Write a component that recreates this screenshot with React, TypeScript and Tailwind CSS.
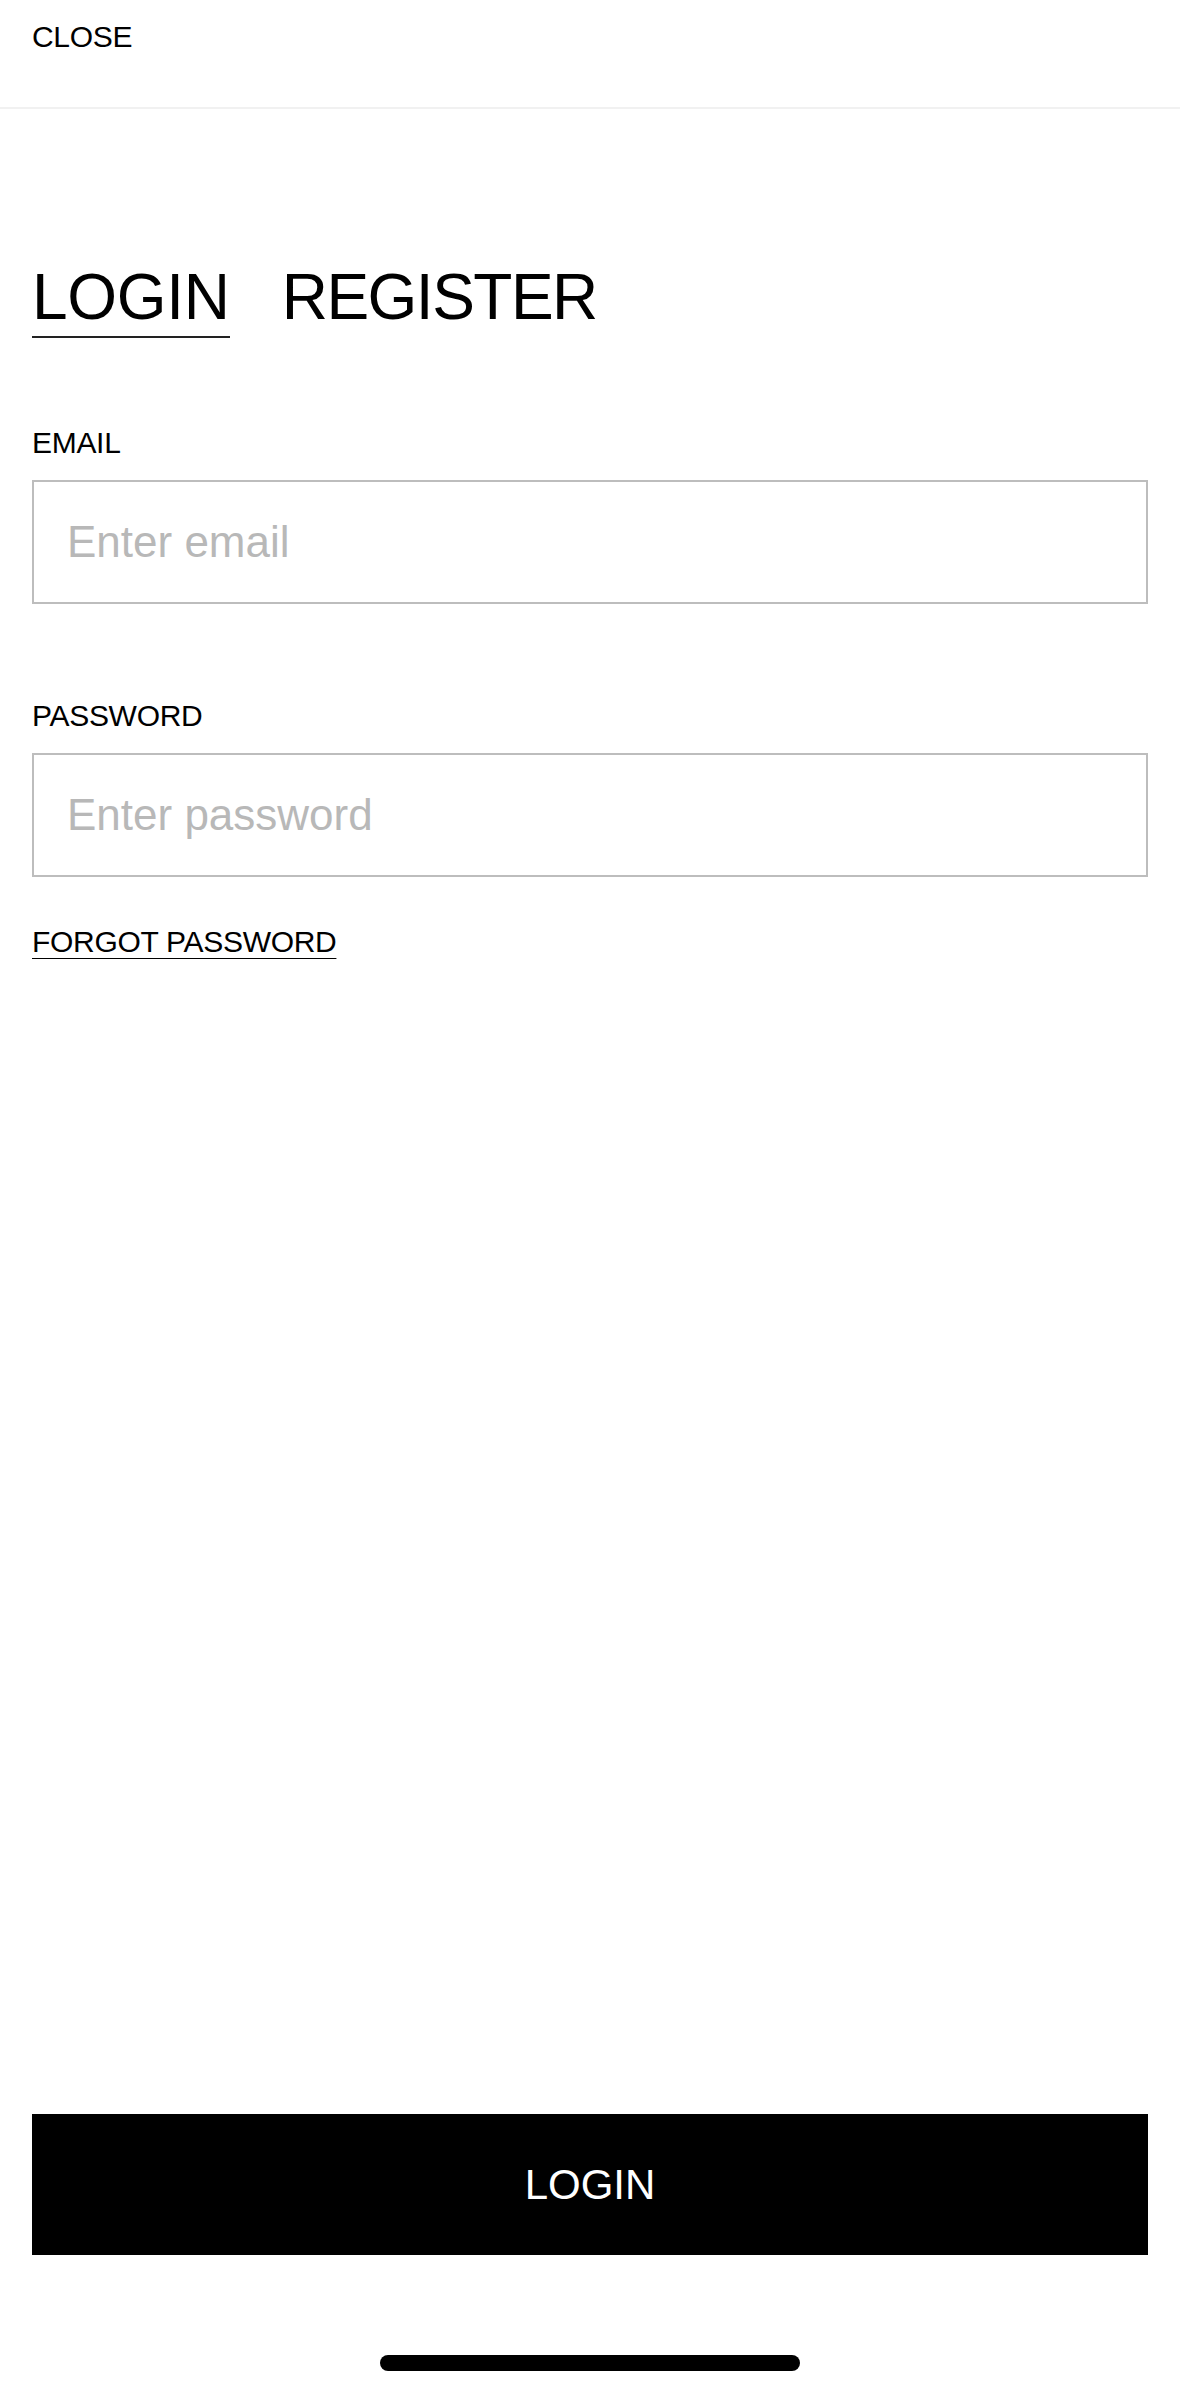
import { useState } from "react";

export default function App() {
  const [tab, setTab] = useState<"login" | "register">("login");
  const [email, setEmail] = useState("");
  const [password, setPassword] = useState("");

  return (
    <div
      className="flex h-[2396px] w-full flex-col bg-white text-black"
      style={{ fontFamily: '"Liberation Sans", Arial, sans-serif' }}
    >
      {/* top bar */}
      <div className="h-[109px] border-b-2 border-[#f1f1f1] px-[32px] pt-[22px]">
        <button className="text-[30px] leading-[30px] tracking-[-0.3px]">CLOSE</button>
      </div>

      <div className="flex flex-1 flex-col px-[32px]">
        {/* tabs */}
        <div className="mt-[156px] flex items-start gap-[52px]">
          <button
            onClick={() => setTab("login")}
            className={`pb-[7px] text-[64px] leading-[64px] tracking-[-0.3px] ${
              tab === "login" ? "border-b-2 border-[#222]" : "border-b-2 border-transparent"
            }`}
          >
            LOGIN
          </button>
          <button
            onClick={() => setTab("register")}
            className={`pb-[7px] text-[64px] leading-[64px] tracking-[-1.5px] ${
              tab === "register" ? "border-b-2 border-[#222]" : "border-b-2 border-transparent"
            }`}
          >
            REGISTER
          </button>
        </div>

        {/* email */}
        <label className="mt-[90px] text-[30px] leading-[30px] tracking-[-0.3px]">EMAIL</label>
        <input
          type="email"
          value={email}
          onChange={(e) => setEmail(e.target.value)}
          placeholder="Enter email"
          className="mt-[22px] h-[124px] w-full border-2 border-[#bdbdbd] px-[33px] text-[44px] outline-none placeholder:text-[#b8b8b8]"
        />

        {/* password */}
        <label className="mt-[97px] text-[30px] leading-[30px] tracking-[-0.3px]">PASSWORD</label>
        <input
          type="password"
          value={password}
          onChange={(e) => setPassword(e.target.value)}
          placeholder="Enter password"
          className="mt-[22px] h-[124px] w-full border-2 border-[#bdbdbd] px-[33px] text-[44px] outline-none placeholder:text-[#b8b8b8]"
        />

        <a
          href="#"
          className="mt-[50px] self-start text-[30px] leading-[30px] tracking-[-0.3px] underline decoration-1 underline-offset-[6px]"
        >
          FORGOT PASSWORD
        </a>

        <button className="mt-auto h-[141px] w-full bg-black text-[42px] text-white">LOGIN</button>

        {/* home indicator */}
        <div className="flex justify-center pt-[100px] pb-[25px]">
          <div className="h-[16px] w-[420px] rounded-full bg-black" />
        </div>
      </div>
    </div>
  );
}
